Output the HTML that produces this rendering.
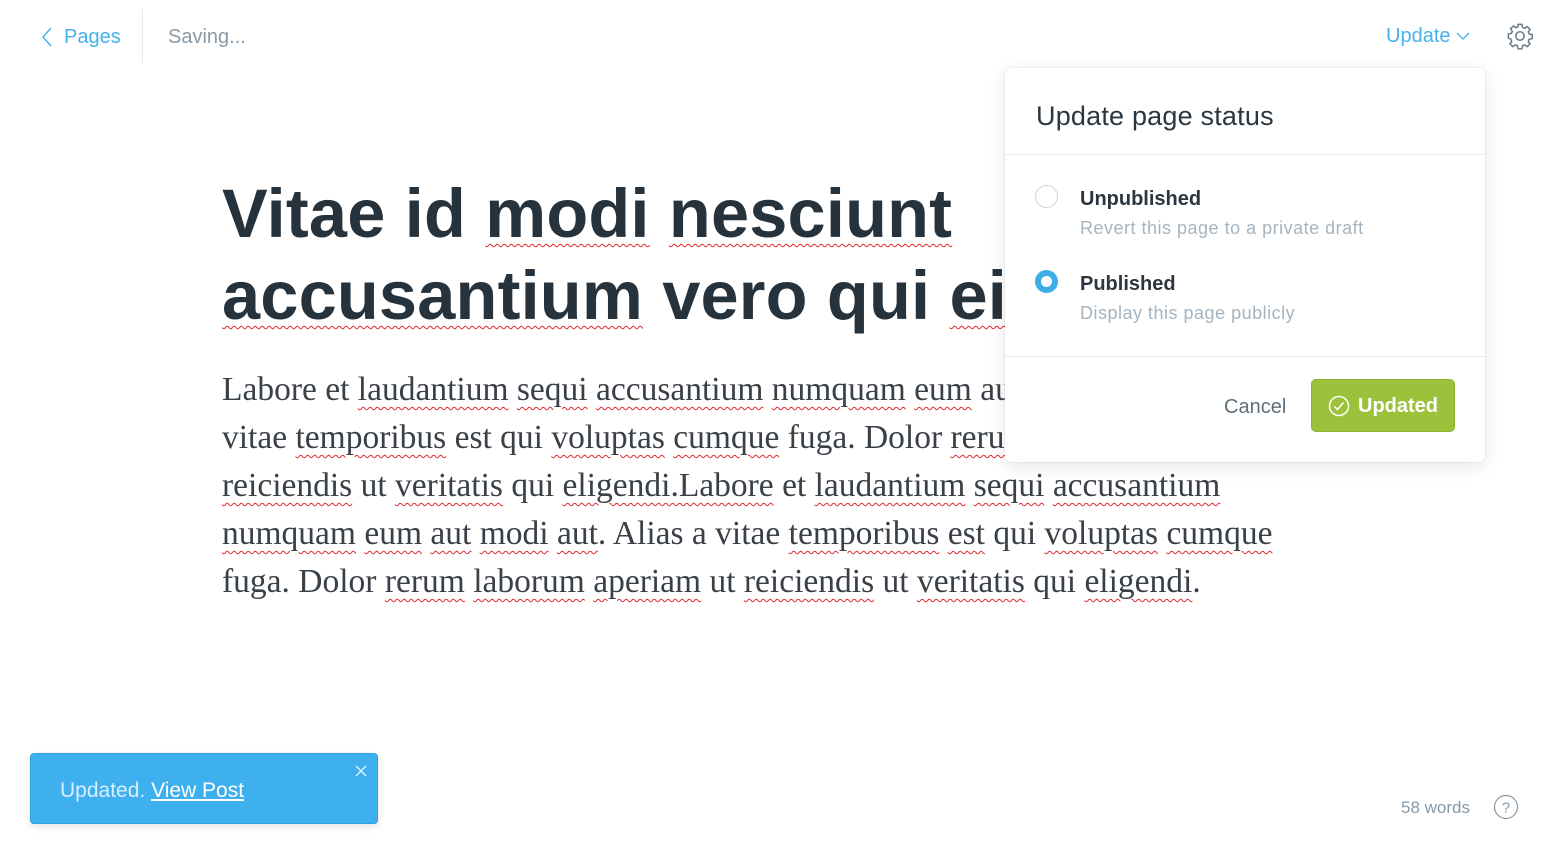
<!DOCTYPE html>
<html><head><meta charset="utf-8"><style>
*{box-sizing:border-box;margin:0;padding:0}
body{width:1554px;height:854px;background:#fff;position:relative;overflow:hidden;font-family:"Liberation Sans","DejaVu Sans",sans-serif;color:#2b3640}
.abs{position:absolute}
.w{text-decoration:underline wavy #e0262b;text-decoration-thickness:1px;text-underline-offset:6px}
h1{position:absolute;left:222px;top:173px;font-size:68.5px;font-weight:bold;line-height:82px;white-space:nowrap;color:#26323c;letter-spacing:0.2px}
.body{position:absolute;left:222px;top:366px;font-family:"Liberation Serif",serif;font-size:33.5px;line-height:48px;color:#3a4047;white-space:nowrap}
.pop{position:absolute;left:1005px;top:68px;width:480px;height:394px;background:#fff;border-radius:6px;box-shadow:0 0 0 1px rgba(0,0,0,.04),0 4px 18px rgba(0,0,0,.1);z-index:5}
</style></head><body>
<svg class="abs" style="left:40px;top:27px" width="14" height="20" viewBox="0 0 14 20"><path d="M11 1L3 10l8 9" fill="none" stroke="#46b1ea" stroke-width="1.4"/></svg>
<div class="abs" style="left:64px;top:26px;font-size:20px;color:#46b1ea">Pages</div>
<div class="abs" style="left:142px;top:9px;width:1px;height:54px;background:#e3ebf0"></div>
<div class="abs" style="left:168px;top:26px;font-size:20px;color:#8a9aa6">Saving...</div>
<div class="abs" style="left:1386px;top:25px;font-size:20px;color:#46b1ea">Update</div>
<svg class="abs" style="left:1456px;top:31px" width="14" height="10" viewBox="0 0 14 10"><path d="M1 2l6 6 6-6" fill="none" stroke="#46b1ea" stroke-width="1.3"/></svg>
<svg class="abs" style="left:1506px;top:22px" width="28" height="28" viewBox="0 0 24 24"><path fill="none" stroke="#6b7b87" stroke-width="1.3" d="M10.3 2h3.4l.5 2.6 1.8.8 2.2-1.5 2.4 2.4-1.5 2.2.8 1.8 2.6.5v3.4l-2.6.5-.8 1.8 1.5 2.2-2.4 2.4-2.2-1.5-1.8.8-.5 2.6h-3.4l-.5-2.6-1.8-.8-2.2 1.5-2.4-2.4 1.5-2.2-.8-1.8L2 13.7v-3.4l2.6-.5.8-1.8-1.5-2.2 2.4-2.4 2.2 1.5 1.8-.8z"/><circle cx="12" cy="12" r="3.6" fill="none" stroke="#6b7b87" stroke-width="1.3"/></svg>

<h1>Vitae id <span class="w">modi</span> <span class="w">nesciunt</span><br><span class="w">accusantium</span> vero qui <span class="w">eius</span> et</h1>
<div class="body">
Labore et <span class="w">laudantium</span> <span class="w">sequi</span> <span class="w">accusantium</span> <span class="w">numquam</span> <span class="w">eum</span> aut modi aut. Alias a<br>
vitae <span class="w">temporibus</span> est qui <span class="w">voluptas</span> <span class="w">cumque</span> fuga. Dolor <span class="w">rerum</span> laborum aperiam ut<br>
<span class="w">reiciendis</span> ut <span class="w">veritatis</span> qui <span class="w">eligendi.Labore</span> et <span class="w">laudantium</span> <span class="w">sequi</span> <span class="w">accusantium</span><br>
<span class="w">numquam</span> <span class="w">eum</span> <span class="w">aut</span> <span class="w">modi</span> <span class="w">aut</span>. Alias a vitae <span class="w">temporibus</span> <span class="w">est</span> qui <span class="w">voluptas</span> <span class="w">cumque</span><br>
fuga. Dolor <span class="w">rerum</span> <span class="w">laborum</span> <span class="w">aperiam</span> ut <span class="w">reiciendis</span> ut <span class="w">veritatis</span> qui <span class="w">eligendi</span>.
</div>

<div class="pop">
 <div class="abs" style="left:31px;top:33px;font-size:27px;color:#2b3640;letter-spacing:0.2px">Update page status</div>
 <div class="abs" style="left:0;top:86px;width:480px;height:1px;background:#e5edf2"></div>
 <div class="abs" style="left:30px;top:117px;width:23px;height:23px;border-radius:50%;border:1px solid #c9d8e2"></div>
 <div class="abs" style="left:75px;top:120px;font-size:20px;font-weight:bold;color:#2b3640">Unpublished</div>
 <div class="abs" style="left:75px;top:150px;font-size:18px;color:#a5b4bf;letter-spacing:0.5px">Revert this page to a private draft</div>
 <div class="abs" style="left:30px;top:202px;width:23px;height:23px;border-radius:50%;border:6px solid #3eaee9;background:#fff"></div>
 <div class="abs" style="left:75px;top:205px;font-size:20px;font-weight:bold;color:#2b3640">Published</div>
 <div class="abs" style="left:75px;top:235px;font-size:18px;color:#a5b4bf;letter-spacing:0.5px">Display this page publicly</div>
 <div class="abs" style="left:0;top:288px;width:480px;height:1px;background:#e5edf2"></div>
 <div class="abs" style="left:219px;top:328px;font-size:20px;color:#5f707c">Cancel</div>
 <div class="abs" style="left:306px;top:311px;width:144px;height:53px;background:#9cc23b;border:1px solid #8db42f;border-radius:5px"></div>
 <svg class="abs" style="left:323px;top:327px" width="22" height="22" viewBox="0 0 22 22"><circle cx="11" cy="11" r="9.5" fill="none" stroke="#fff" stroke-width="1.5"/><path d="M6.5 11.5l3 3 6-7" fill="none" stroke="#fff" stroke-width="1.5"/></svg>
 <div class="abs" style="left:353px;top:327px;font-size:20px;font-weight:bold;color:#fff">Updated</div>
</div>

<div class="abs" style="left:30px;top:753px;width:348px;height:71px;background:#3fb0ee;border:1px solid #2ea2e3;border-radius:4px;box-shadow:0 3px 8px rgba(0,0,0,.1)">
 <div class="abs" style="left:29px;top:25px;font-size:21px;color:#d8efff">Updated. <span style="color:#fff;text-decoration:underline">View Post</span></div>
 <svg class="abs" style="left:324px;top:11px" width="12" height="12" viewBox="0 0 12 12"><path d="M1 1l10 10M11 1L1 11" stroke="#e0f2ff" stroke-width="1.3"/></svg>
</div>
<div class="abs" style="left:1401px;top:798px;font-size:17px;color:#8899a6">58 words</div>
<svg class="abs" style="left:1493px;top:794px" width="26" height="26" viewBox="0 0 26 26"><circle cx="13" cy="13" r="11.5" fill="none" stroke="#8899a6" stroke-width="1.2"/><text x="13" y="18.5" font-size="15" fill="#8899a6" text-anchor="middle" font-family="Liberation Sans,sans-serif">?</text></svg>
</body></html>
